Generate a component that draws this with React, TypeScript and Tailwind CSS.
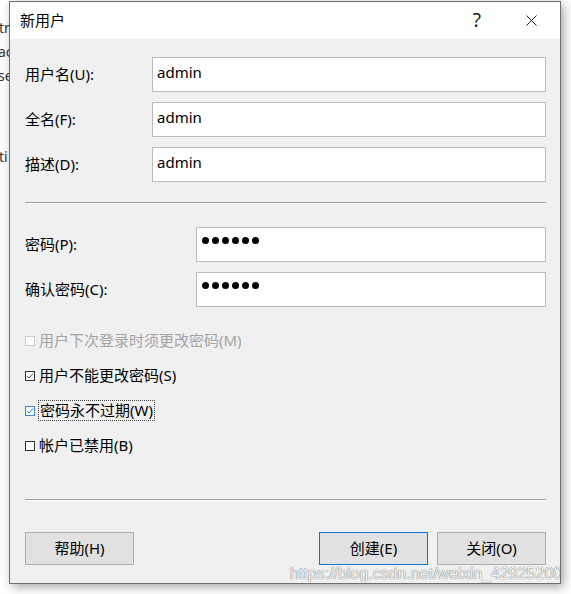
import React from "react";

const font = "font-['Noto_Sans','Noto_Sans_CJK_SC',sans-serif]";

const Field = ({ label, width, value, password }: { label: string; width: string; value: string; password?: boolean }) => (
  <div className="flex items-center h-[35px]">
    <div className={`${width} shrink-0 text-[15px] text-black`}>{label}</div>
    {password ? (
      <div className="flex-1 h-[35px] bg-white border border-[#bcbcbc] pl-[5px] pt-[9px] flex gap-[3px]">
        {[0, 1, 2, 3, 4, 5].map((i) => (
          <span key={i} className="w-[7px] h-[7px] rounded-full bg-black" />
        ))}
      </div>
    ) : (
      <div className="flex-1 h-[35px] bg-white border border-[#bcbcbc] pl-[4px] pt-[4px] text-[15px] leading-[20px] text-black">
        {value}
      </div>
    )}
  </div>
);

const Check = ({ label, checked, disabled, focused }: { label: string; checked?: boolean; disabled?: boolean; focused?: boolean }) => {
  const box = disabled
    ? "border-[#cccccc] bg-white"
    : focused
    ? "border-[#3c8ad8] bg-white"
    : "border-[#333333] bg-white";
  const stroke = focused ? "#2f7ed0" : "#555555";
  return (
    <div className="flex items-center h-[35px]">
      <span className={`w-[10px] h-[10px] border ${box} flex items-center justify-center`}>
        {checked && (
          <svg width="8" height="8" viewBox="0 0 8 8">
            <path d="M1 4 L3 6 L7 1.5" fill="none" stroke={stroke} strokeWidth="1" />
          </svg>
        )}
      </span>
      {focused ? (
        <span className="ml-[3px] border border-dotted border-[#444] px-[1px] leading-[19px] text-[15px] text-black">{label}</span>
      ) : (
        <span className={`ml-[4px] text-[15px] ${disabled ? "text-[#a3a3a3]" : "text-black"}`}>{label}</span>
      )}
    </div>
  );
};

const Btn = ({ label, primary }: { label: string; primary?: boolean }) => (
  <button
    className={`w-[109px] h-[33px] bg-[#e1e1e1] border text-[15px] text-black ${primary ? "border-[#0078d7]" : "border-[#adadad]"}`}
  >
    {label}
  </button>
);

export default function App() {
  return (
    <div className={`w-[571px] h-[594px] bg-white overflow-hidden flex ${font}`}>
      <div className="w-[9px] shrink-0 overflow-hidden text-[14px] text-[#333] leading-[24px] pt-[16px] whitespace-nowrap">
        <div className="ml-[-1px]">tra</div>
        <div className="ml-[-2px]">ac</div>
        <div className="ml-[-2px]">se</div>
        <div className="ml-[-1px] mt-[57px]">ti</div>
      </div>
      <div className="relative w-[552px] h-[583px] mt-[1px] border border-[#6e6e6e] flex flex-col overflow-hidden shadow-[3px_3px_10px_rgba(0,0,0,0.35)]">
        <div className="h-[37px] shrink-0 bg-white flex items-center pl-[10px] pr-[23px]">
          <span className="text-[15px] text-black">新用户</span>
          <span className="ml-auto text-[19px] text-[#222] leading-none">?</span>
          <svg className="ml-[45px]" width="11" height="11" viewBox="0 0 11 11">
            <path d="M0.5 0.5 L10.5 10.5 M10.5 0.5 L0.5 10.5" stroke="#222" strokeWidth="1" />
          </svg>
        </div>
        <div className="flex-1 bg-[#f0f0f0] pl-[15px] pr-[14px] pt-[18px] flex flex-col">
          <div className="flex flex-col gap-[10px]">
            <Field label="用户名(U):" width="w-[127px]" value="admin" />
            <Field label="全名(F):" width="w-[127px]" value="admin" />
            <Field label="描述(D):" width="w-[127px]" value="admin" />
          </div>
          <div className="mt-[20px] h-px bg-[#a0a0a0]" />
          <div className="h-px bg-white" />
          <div className="mt-[23px] flex flex-col gap-[10px]">
            <Field label="密码(P):" width="w-[171px]" value="" password />
            <Field label="确认密码(C):" width="w-[171px]" value="" password />
          </div>
          <div className="mt-[16px] flex flex-col">
            <Check label="用户下次登录时须更改密码(M)" disabled />
            <Check label="用户不能更改密码(S)" checked />
            <Check label="密码永不过期(W)" checked focused />
            <Check label="帐户已禁用(B)" />
          </div>
          <div className="mt-[36px] h-px bg-[#a0a0a0]" />
          <div className="h-px bg-white" />
          <div className="mt-[31px] flex gap-[9px]">
            <Btn label="帮助(H)" />
            <div className="ml-auto" />
            <Btn label="创建(E)" primary />
            <Btn label="关闭(O)" />
          </div>
        </div>
        <div className="absolute left-[280px] top-[563px] whitespace-nowrap font-['Liberation_Sans',sans-serif] text-[16px] leading-[18px] text-[#f4f4f4] [text-shadow:0_0_1px_rgba(0,0,0,0.8)]">
          https://blog.csdn.net/weixin_42925200
        </div>
      </div>
    </div>
  );
}
